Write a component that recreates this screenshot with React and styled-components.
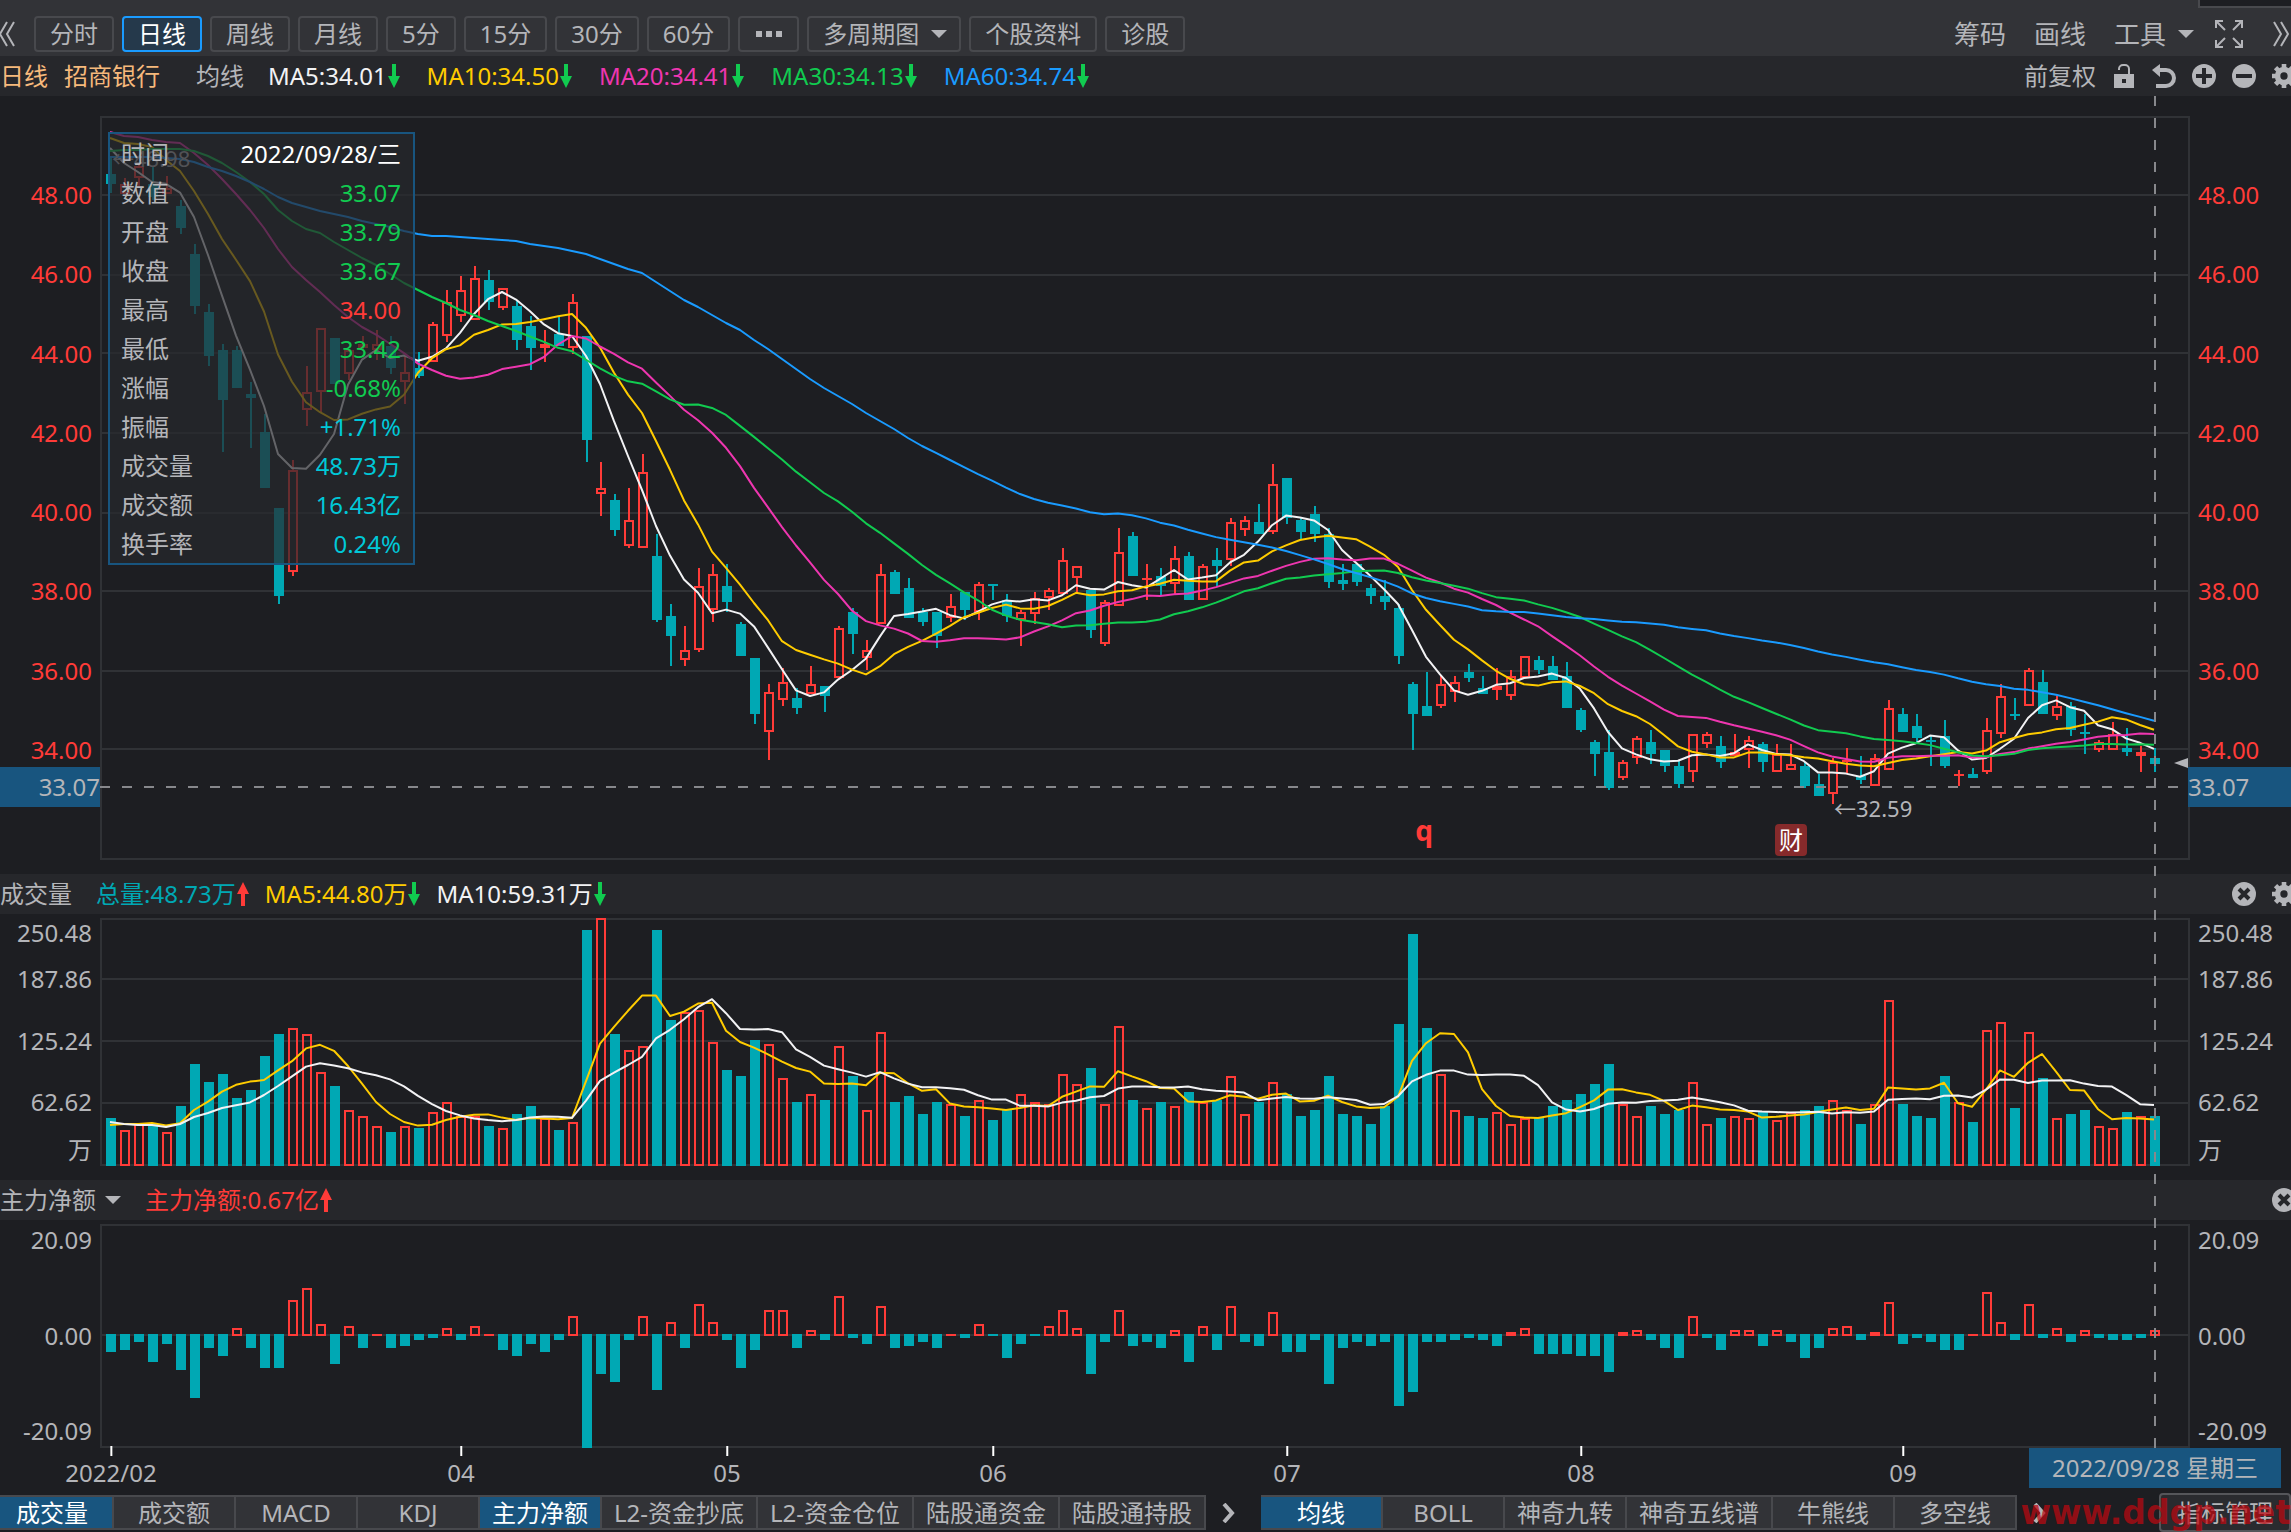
import React from 'react'

import styled, { createGlobalStyle } from 'styled-components'

const GlobalStyle = createGlobalStyle`
  * {
    box-sizing: border-box;
  }
  body {
    margin: 0;
    background: #1d1e22;
  }
  body, button, select {
    font-family: "Noto Sans", "Noto Sans CJK SC", sans-serif;
    font-size: 24px;
    line-height: 24px;
    color: #b4b5b9;
  }
  button, select {
    margin: 0;
    padding: 0;
    border: 0;
    background: none;
    cursor: pointer;
  }
  svg {
    display: block;
    flex: none;
  }
`

const UP = '#ff3b38'
const DOWN = '#00a8b4'
const GREEN = '#11cb50'
const CYAN = '#00c8d8'
const YELLOW = '#ffcc00'
const MAGENTA = '#ee36b0'
const BLUE = '#1a9bff'

/* ---------- chart data ---------- */

// [high, body top, body bottom, low, rising] in drawing units, y grows downwards
const CANDLES = [
  [157, 174, 184, 193, 0], [178, 184, 194, 194, 1], [164, 166, 178, 186, 1], [166, 184, 197, 200, 0],
  [176, 188, 194, 194, 1], [200, 206, 228, 234, 0], [244, 254, 306, 314, 0], [304, 312, 356, 366, 0],
  [344, 350, 400, 452, 0], [346, 350, 388, 388, 0], [382, 394, 398, 448, 0], [414, 432, 488, 488, 0],
  [508, 508, 596, 604, 0], [460, 470, 572, 576, 1], [366, 392, 410, 426, 1], [328, 328, 392, 412, 1],
  [338, 338, 384, 384, 0], [350, 350, 374, 380, 1], [336, 344, 348, 350, 1], [330, 344, 350, 360, 1],
  [336, 346, 368, 374, 0], [356, 372, 382, 404, 1], [352, 368, 376, 378, 0], [322, 324, 362, 362, 1],
  [290, 302, 336, 342, 1], [276, 290, 316, 322, 1], [266, 278, 320, 320, 1], [270, 280, 302, 310, 0],
  [288, 288, 308, 310, 1], [300, 306, 340, 350, 0], [316, 326, 348, 370, 0], [330, 344, 348, 362, 1],
  [317, 334, 346, 346, 0], [294, 302, 348, 354, 1], [336, 336, 440, 462, 0], [462, 488, 494, 516, 1],
  [494, 500, 530, 536, 0], [488, 520, 546, 548, 1], [454, 472, 548, 548, 1], [534, 556, 620, 622, 0],
  [604, 616, 636, 666, 0], [626, 650, 660, 666, 1], [568, 586, 650, 652, 1], [564, 574, 610, 622, 1],
  [564, 586, 602, 612, 0], [622, 624, 656, 656, 0], [658, 658, 714, 724, 0], [684, 692, 732, 760, 1],
  [668, 682, 700, 706, 1], [688, 698, 708, 714, 0], [666, 684, 694, 694, 1], [686, 686, 696, 712, 0],
  [626, 628, 678, 678, 1], [608, 612, 634, 654, 0], [640, 650, 658, 670, 1], [564, 574, 624, 624, 1],
  [570, 572, 594, 594, 0], [578, 588, 618, 618, 0], [608, 612, 622, 626, 0], [612, 612, 636, 648, 0],
  [594, 606, 618, 622, 1], [592, 592, 610, 620, 0], [582, 584, 612, 620, 1], [584, 584, 586, 600, 0],
  [594, 600, 616, 622, 0], [610, 612, 620, 646, 1], [592, 598, 614, 624, 1], [588, 590, 598, 610, 1],
  [548, 560, 594, 594, 1], [566, 566, 578, 592, 1], [590, 590, 630, 638, 0], [600, 602, 644, 646, 1],
  [528, 552, 606, 606, 1], [532, 536, 576, 576, 0], [564, 578, 580, 600, 1], [568, 576, 586, 596, 0],
  [546, 558, 584, 594, 1], [552, 556, 600, 600, 0], [564, 566, 600, 600, 1], [548, 560, 566, 586, 0],
  [518, 522, 560, 566, 1], [516, 520, 530, 536, 1], [504, 522, 534, 534, 0], [464, 484, 532, 534, 1],
  [478, 478, 518, 524, 0], [518, 520, 532, 540, 0], [506, 514, 534, 542, 0], [528, 534, 582, 588, 0],
  [564, 580, 584, 590, 0], [564, 564, 582, 586, 0], [584, 588, 596, 604, 0], [580, 596, 602, 610, 0],
  [604, 608, 656, 664, 0], [682, 684, 714, 750, 0], [672, 706, 716, 716, 0], [676, 684, 706, 708, 1],
  [676, 682, 692, 702, 1], [664, 672, 678, 682, 0], [676, 688, 694, 694, 0], [668, 686, 690, 700, 1],
  [670, 676, 696, 700, 1], [656, 656, 678, 678, 1], [656, 660, 670, 674, 0], [656, 666, 680, 680, 0],
  [662, 676, 708, 708, 0], [708, 710, 730, 732, 0], [740, 742, 754, 776, 0], [730, 752, 788, 790, 0],
  [760, 762, 778, 780, 1], [736, 738, 758, 764, 1], [730, 742, 754, 764, 0], [750, 750, 766, 772, 0],
  [760, 766, 784, 788, 0], [734, 734, 772, 782, 1], [732, 734, 744, 748, 1], [736, 746, 762, 768, 0],
  [734, 752, 756, 756, 1], [736, 740, 750, 768, 1], [742, 744, 762, 772, 0], [744, 754, 772, 772, 1],
  [744, 764, 770, 770, 1], [762, 766, 786, 788, 0], [774, 784, 796, 796, 0], [758, 762, 794, 804, 1],
  [748, 760, 762, 774, 1], [756, 776, 780, 784, 0], [754, 758, 786, 786, 1], [700, 708, 770, 770, 1],
  [708, 714, 732, 732, 0], [714, 726, 738, 742, 0], [736, 740, 742, 766, 0], [720, 736, 766, 768, 0],
  [770, 774, 776, 786, 1], [768, 774, 778, 778, 0], [718, 730, 772, 774, 1], [684, 696, 734, 738, 1],
  [698, 714, 716, 720, 0], [668, 670, 706, 706, 1], [670, 682, 714, 714, 0], [696, 706, 716, 720, 1],
  [702, 706, 730, 736, 0], [714, 732, 734, 754, 0], [740, 742, 750, 752, 1], [722, 734, 750, 750, 1],
  [728, 748, 752, 756, 0], [746, 752, 756, 772, 1], [748, 758, 764, 772, 0],
]

const VOLUMES = [
  48, 36, 42, 42, 34, 60, 102, 84, 92, 68, 76, 110, 132, 138, 132, 94, 80, 56, 50, 40, 34, 40, 38, 54, 64,
  50, 50, 40, 38, 52, 60, 48, 36, 44, 236, 248, 132, 116, 120, 236, 146, 154, 156, 124, 96, 90, 126, 122,
  88, 64, 72, 66, 120, 90, 56, 134, 64, 70, 52, 64, 62, 50, 66, 46, 56, 72, 64, 62, 92, 82, 98, 62, 140,
  66, 58, 64, 60, 74, 64, 66, 90, 52, 64, 84, 72, 50, 56, 90, 52, 50, 42, 60, 142, 232, 138, 92, 56, 50,
  48, 54, 42, 48, 48, 60, 66, 72, 82, 102, 62, 50, 60, 52, 56, 84, 42, 48, 50, 48, 54, 46, 54, 56, 60, 66,
  56, 42, 62, 166, 62, 50, 48, 90, 64, 44, 136, 144, 58, 134, 88, 48, 52, 56, 40, 38, 54, 50, 50,
]

const NET_FLOW = [
  -17, -15, -7, -27, -9, -35, -63, -13, -21, 7, -13, -33, -33, 35, 47, 11, -29, 9, -13, 1, -13, -11, -5,
  -3, 7, -5, 9, 1, -15, -21, -9, -17, -5, 19, -113, -39, -47, -5, 19, -55, 13, -13, 31, 13, -5, -33, -15,
  25, 25, -13, 5, -5, 39, -3, -9, 29, -13, -11, -7, -13, 1, -3, 11, -1, -23, -9, -1, 9, 25, 7, -39, -7,
  25, -11, -7, -13, 5, -27, 9, -15, 29, -7, -11, 23, -17, -17, -5, -49, -13, -7, -11, -7, -71, -57, -7,
  -7, -5, -3, -5, -11, 3, 7, -19, -19, -19, -21, -21, -37, 3, 5, -5, -13, -23, 19, -3, -15, 5, 5, -11, 5,
  -7, -23, -13, 7, 9, -5, 3, 33, -9, -3, -7, -15, -15, 1, 43, 13, -5, 31, -3, 7, -7, 5, -3, -5, -5, -3, 5,
]

// averages for the first bars, where the window reaches back before the visible range
const SEED5 = [148, 163, 172, 182]
const SEED10 = [138, 143, 144, 147, 160, 171, 191, 214, 239]
const SEED20 = [132, 136, 137, 140, 142, 143, 153, 165, 179, 194, 210, 228, 249, 267, 280, 292, 305, 317, 327]
const SEED30 = [
  151, 150, 150, 149, 149, 149, 151, 156, 163, 172, 182, 194, 210, 221, 229, 233, 242, 250, 258, 265,
  274, 283, 290, 297, 303, 310, 315, 321, 326,
]
const SEED60 = [
  157, 157, 157, 157, 158, 159, 162, 167, 171, 176, 182, 189, 197, 203, 207, 211, 214, 217, 221, 224,
  227, 231, 234, 236, 236, 237, 238, 239, 240, 241, 244, 246, 248, 251, 254, 259, 264, 269, 273, 282,
  291, 300, 307, 315, 323, 330, 340, 349, 359, 369, 379, 388, 396, 404, 413, 421, 429, 438, 446,
]

const PLOT_X = 100
const PLOT_W = 2090
const PLOT_RIGHT = 2189
const VOLUME_BASE = 1166
const NET_BASE = 1335

const barX = (i) => 111 + 14 * i

const closes = CANDLES.map(([, top, bottom, , up]) => (up ? top : bottom))
const volumeTops = VOLUMES.map((v) => VOLUME_BASE - v)

function movingAverage(values, size, seed) {
  return values.map((_, i) => {
    if (i < seed.length) return seed[i]
    const part = values.slice(i - size + 1, i + 1)
    return part.reduce((sum, v) => sum + v, 0) / size
  })
}

const PRICE_LINES = [
  { color: '#f2f2f4', values: movingAverage(closes, 5, SEED5) },
  { color: YELLOW, values: movingAverage(closes, 10, SEED10) },
  { color: MAGENTA, values: movingAverage(closes, 20, SEED20) },
  { color: GREEN, values: movingAverage(closes, 30, SEED30) },
  { color: BLUE, values: movingAverage(closes, 60, SEED60) },
]

const VOLUME_LINES = [
  { color: YELLOW, values: movingAverage(volumeTops, 5, [1125, 1124, 1124, 1123]) },
  { color: '#f2f2f4', values: movingAverage(volumeTops, 10, [1122, 1124, 1125, 1125, 1127, 1124, 1117, 1113, 1108]) },
]

/* ---------- page text ---------- */

const PERIODS = ['分时', '日线', '周线', '月线', '5分', '15分', '30分', '60分']
const PRICE_LABELS = ['48.00', '46.00', '44.00', '42.00', '40.00', '38.00', '36.00', '34.00']
const VOLUME_LABELS = ['250.48', '187.86', '125.24', '62.62', '万']
const NET_LABELS = ['20.09', '0.00', '-20.09']

const AVERAGES = [
  { text: 'MA5:34.01', color: '#f2f2f4' },
  { text: 'MA10:34.50', color: YELLOW },
  { text: 'MA20:34.41', color: MAGENTA },
  { text: 'MA30:34.13', color: GREEN },
  { text: 'MA60:34.74', color: BLUE },
]

const DETAILS = [
  ['时间', '2022/09/28/三', '#ffffff'],
  ['数值', '33.07', GREEN],
  ['开盘', '33.79', GREEN],
  ['收盘', '33.67', GREEN],
  ['最高', '34.00', UP],
  ['最低', '33.42', GREEN],
  ['涨幅', '-0.68%', GREEN],
  ['振幅', '+1.71%', CYAN],
  ['成交量', '48.73万', CYAN],
  ['成交额', '16.43亿', CYAN],
  ['换手率', '0.24%', CYAN],
]

const MONTHS = [
  { text: '2022/02', bar: 0 },
  { text: '04', bar: 25 },
  { text: '05', bar: 44 },
  { text: '06', bar: 63 },
  { text: '07', bar: 84 },
  { text: '08', bar: 105 },
  { text: '09', bar: 128 },
]

const SUB_TABS = ['成交量', '成交额', 'MACD', 'KDJ', '主力净额', 'L2-资金抄底', 'L2-资金仓位', '陆股通资金', '陆股通持股']
const MAIN_TABS = ['均线', 'BOLL', '神奇九转', '神奇五线谱', '牛熊线', '多空线']

/* ---------- styled parts ---------- */

const Page = styled.main`
  position: relative;
  overflow: hidden;
  background: #1d1e22;
  white-space: nowrap;
`
const Toolbar = styled.header`
  position: relative;
  display: flex;
  align-items: center;
  justify-content: space-between;
  height: 56px;
  padding: 12px 2px 0 0;
  background: #323337;
`
const ToolGroup = styled.div`
  display: flex;
  align-items: center;
  gap: ${({ $gap }) => $gap}px;
`
const PeriodButton = styled.button`
  display: flex;
  align-items: center;
  height: 36px;
  padding: 0 14px;
  border: 2px solid ${({ $active }) => ($active ? BLUE : '#48494d')};
  border-radius: 4px;
  background: ${({ $active }) => ($active ? '#25394b' : 'transparent')};
  color: ${({ $active }) => ($active ? '#ffffff' : '#b4b5b9')};
`
const PeriodSelect = styled.label`
  display: flex;
  align-items: center;
  gap: 12px;
  height: 36px;
  padding: 0 12px 0 14px;
  border: 2px solid #48494d;
  border-radius: 4px;
`
const BareSelect = styled.select`
  appearance: none;
  height: 32px;
`
const ToolButton = styled.button`
  display: flex;
  align-items: center;
  gap: 12px;
  font-size: 26px;
  line-height: 32px;
`
const IconButton = styled.button`
  display: block;
`
const WindowEdge = styled.div`
  position: absolute;
  top: 0;
  right: 0;
  width: 93px;
  height: 8px;
  border-left: 2px solid #48494d;
  border-bottom: 2px solid #48494d;
  background: #1d1e22;
`
const InfoBar = styled.div`
  display: flex;
  align-items: center;
  height: 40px;
  overflow: hidden;
  background: #26272b;
`
const InfoTitle = styled.span`
  margin-right: ${({ $gap }) => $gap}px;
  color: ${({ $color }) => $color || '#b4b5b9'};
`
const InfoValues = styled.div`
  display: flex;
  gap: ${({ $gap }) => $gap}px;
`
const InfoValue = styled.span`
  display: flex;
  align-items: center;
  gap: 1px;
  color: ${({ $color }) => $color};
`
const InfoActions = styled.div`
  display: flex;
  align-items: center;
  gap: 16px;
  margin-left: auto;
  margin-right: -5px;
`
const InfoSelect = styled.label`
  display: flex;
  align-items: center;
  gap: 9px;
  margin-right: 24px;
`
const Charts = styled.div`
  position: relative;
`
const Panel = styled.section`
  position: relative;
  display: grid;
  grid-template-columns: 100px 1fr 101px;
  height: ${({ $height }) => $height}px;
`
const Plot = styled.svg`
  width: 100%;
  height: ${({ $height }) => $height}px;
`
const Axis = styled.div`
  display: flex;
  flex-direction: column;
  justify-content: space-between;
  padding-left: ${({ $side }) => ($side === 'right' ? '8px' : '0')};
  padding-right: ${({ $side }) => ($side === 'left' ? '8px' : '0')};
  text-align: ${({ $side }) => ($side === 'left' ? 'right' : 'left')};
`
const PriceAxis = styled(Axis)`
  padding-top: 87px;
  padding-bottom: 112px;
  color: ${UP};
`
const VolumeAxis = styled(Axis)`
  display: grid;
  grid-template-rows: 46px 62px 61px 48px;
  justify-content: stretch;
  align-content: start;
  padding-top: 7px;
`
const NetAxis = styled(Axis)`
  padding-top: 8px;
  padding-bottom: 5px;
`
const PriceFlag = styled.div`
  position: absolute;
  top: 671px;
  ${({ $side }) => $side}: 0;
  width: ${({ $side }) => ($side === 'left' ? 100 : 103)}px;
  padding: 8px 0;
  background: #18557f;
  text-align: ${({ $side }) => ($side === 'left' ? 'right' : 'left')};
`
const Details = styled.dl`
  position: absolute;
  top: 36px;
  left: 108px;
  width: 307px;
  margin: 0;
  padding: 0 12px 0 11px;
  border: 2px solid #18557f;
  background: rgba(39, 40, 44, 0.7);
`
const DetailRow = styled.div`
  display: flex;
  justify-content: space-between;
  line-height: 39px;
`
const DetailName = styled.dt`
  color: #b4b5b9;
`
const DetailValue = styled.dd`
  margin: 0;
  color: ${({ $color }) => $color};
`
const Crosshair = styled.svg`
  position: absolute;
  top: 0;
  left: 100px;
  width: calc(100% - 201px);
  height: 1352px;
  pointer-events: none;
`
const DateAxis = styled.div`
  position: relative;
  height: 47px;
  margin: 0 101px 0 100px;
`
const Month = styled.span`
  position: absolute;
  top: 0;
  padding-top: 13px;
  transform: translateX(-50%);

  &::before {
    content: '';
    position: absolute;
    top: -2px;
    left: calc(50% - 1px);
    width: 2px;
    height: 10px;
    background: #ffffff;
  }
`
const DateFlag = styled.div`
  position: absolute;
  top: 0;
  right: -91px;
  width: 252px;
  padding: 8px 0;
  background: #18557f;
  text-align: center;
`
const Footer = styled.footer`
  position: relative;
  display: flex;
  height: 37px;
`
const Tabs = styled.nav`
  display: flex;
  height: 35px;
  margin-left: ${({ $pull }) => ($pull ? '-8px' : '0')};
  border-top: 2px solid #48494d;
  border-bottom: 2px solid #48494d;
  background: #323337;
`
const Tab = styled.button`
  min-width: 122px;
  padding: 0 12px;
  border-right: 2px solid #48494d;
  background: ${({ $active }) => ($active ? '#18557f' : 'transparent')};
  color: ${({ $active }) => ($active ? '#ffffff' : '#b4b5b9')};
`
const NextButton = styled.button`
  display: flex;
  align-items: center;
  width: 55px;
  height: 35px;
  padding-left: 16px;
`
const ManageButton = styled.button`
  width: 132px;
  height: 39px;
  margin: -2px 0 0 auto;
  border: 2px solid #55565a;
  border-radius: 4px;
  background: #2a2b2f;
`
const Watermark = styled.span`
  position: absolute;
  right: 0;
  top: 0;
  font-family: "DejaVu Sans", sans-serif;
  font-size: 33px;
  font-weight: 700;
  line-height: 35px;
  color: rgba(190, 8, 16, 0.72);
  pointer-events: none;
`

/* ---------- icons ---------- */

function Caret() {
  return (
    <svg width="16" height="8" viewBox="0 0 16 8"><path d="M0 0h16l-8 8z" fill="#b4b5b9" /></svg>
  )
}

function TrendArrow({ up }) {
  return (
    <svg width="12" height="24" viewBox="0 0 12 24">
      {
        up ?
          <path d="M6 0l6 12H8v12H4V12H0z" fill={UP} /> :
          <path d="M4 0h4v12h4L6 24 0 12h4z" fill={GREEN} />
      }
    </svg>
  )
}

function DoubleLeft() {
  return (
    <svg width="26" height="26" viewBox="0 0 26 26" fill="none" stroke="#b4b5b9" strokeWidth="2">
      <path d="M7 1L0 13l7 12M14 1L7 13l7 12" />
    </svg>
  )
}

function DoubleRight() {
  return (
    <svg width="25" height="26" viewBox="0 0 25 26" fill="none" stroke="#b4b5b9" strokeWidth="2">
      <path d="M10 1l7 12-7 12M17 1l7 12-7 12" />
    </svg>
  )
}

function ExpandIcon() {
  return (
    <svg width="28" height="28" viewBox="0 0 28 28" fill="none" stroke="#b4b5b9" strokeWidth="2">
      <path d="M1 8V1h7M1 1l9 9M20 1h7v7M27 1l-9 9M1 20v7h7M1 27l9-9M20 27h7v-7M27 27l-9-9" />
    </svg>
  )
}

function UnlockIcon() {
  return (
    <svg width="24" height="24" viewBox="0 0 24 24">
      <path d="M7 6V5a4 4 0 0 1 4-4h2a4 4 0 0 1 4 4v6" fill="none" stroke="#b4b5b9" strokeWidth="2" />
      <path d="M2 10h20v14H2zM10 15v4h4v-4z" fill="#b4b5b9" fillRule="evenodd" />
    </svg>
  )
}

function UndoIcon() {
  return (
    <svg width="24" height="24" viewBox="0 0 24 24">
      <path d="M6 6h8a8 8 0 0 1 0 16H4" fill="none" stroke="#b4b5b9" strokeWidth="4" />
      <path d="M0 6l8-6v13z" fill="#b4b5b9" />
    </svg>
  )
}

function RoundIcon({ d }) {
  return (
    <svg width="24" height="24" viewBox="0 0 24 24">
      <circle cx="12" cy="12" r="12" fill="#b4b5b9" />
      <path d={d} stroke="#26272b" strokeWidth="4" />
    </svg>
  )
}

function GearIcon() {
  return (
    <svg width="24" height="24" viewBox="-13 -13 26 26" overflow="visible">
      <circle r="7" fill="none" stroke="#b4b5b9" strokeWidth="6" />
      {
        [0, 45, 90, 135].map((a) => (
          <path key={a} d="M-2.5 -13h5v5h-5zM-2.5 8h5v5h-5z" fill="#b4b5b9" transform={`rotate(${a})`} />
        ))
      }
    </svg>
  )
}

function ChevronRight() {
  return (
    <svg width="14" height="20" viewBox="0 0 14 20" fill="none" stroke="#b4b5b9" strokeWidth="4">
      <path d="M2 1l8 9-8 9" />
    </svg>
  )
}

/* ---------- chart pieces ---------- */

function GridLines({ lines, top, bottom }) {
  return (
    <g stroke="#303236" strokeWidth="2" fill="none">
      <path d={`M101 ${top}H${PLOT_RIGHT}V${bottom}H101Z`} />
      {lines.map((y) => <path key={y} d={`M102 ${y}H${PLOT_RIGHT}`} />)}
    </g>
  )
}

function Bar({ x, top, bottom, up }) {
  if(up && bottom - top > 4)
    return <rect x={x - 4} y={top + 1} width="8" height={bottom - top - 2} fill="none" stroke={UP} strokeWidth="2" />
  return <rect x={x - 5} y={top} width="10" height={bottom - top} fill={up ? UP : DOWN} />
}

function Candle({ x, data }) {
  const [high, top, bottom, low, up] = data
  return (
    <g>
      <path d={`M${x} ${high}V${top}M${x} ${bottom}V${low}`} stroke={up ? UP : DOWN} strokeWidth="2" />
      <Bar x={x} top={top} bottom={bottom} up={up} />
    </g>
  )
}

function AverageLine({ values, color }) {
  const points = values.map((y, i) => `${barX(i) - 1},${y}`).join(' ')
  return <polyline points={points} fill="none" stroke={color} strokeWidth="2" strokeLinejoin="round" />
}

function PriceChart() {
  return (
    <Plot $height={778} viewBox={`${PLOT_X} 96 ${PLOT_W} 778`} preserveAspectRatio="none">
      <GridLines lines={[195, 275, 353, 433, 513, 591, 671, 749]} top={117} bottom={859} />
      {CANDLES.map((data, i) => <Candle key={i} x={barX(i)} data={data} />)}
      {PRICE_LINES.map(({ color, values }) => <AverageLine key={color} color={color} values={values} />)}
      <path d="M100 787H2180" stroke="#87888c" strokeWidth="2" strokeDasharray="10 12" />
      <path d="M2174 763l14-5v10z" fill="#b4b5b9" />
      <g fill="#b4b5b9" fontSize="22">
        <text x="112" y="167">←48.98</text>
        <text x="1834" y="817">←32.59</text>
      </g>
      <text x="1424" y="841" fill={UP} fontSize="28" fontWeight="700" textAnchor="middle">q</text>
      <rect x="1775" y="824" width="32" height="32" rx="4" fill="#862a2b" />
      <text x="1791" y="849" fill="#ffffff" fontSize="24" textAnchor="middle">财</text>
    </Plot>
  )
}

function VolumeChart() {
  return (
    <Plot $height={266} viewBox={`${PLOT_X} 914 ${PLOT_W} 266`} preserveAspectRatio="none">
      <GridLines lines={[979, 1041, 1103]} top={919} bottom={1165} />
      {
        volumeTops.map((top, i) => (
          <Bar key={i} x={barX(i)} top={top} bottom={VOLUME_BASE} up={CANDLES[i][4]} />
        ))
      }
      {VOLUME_LINES.map(({ color, values }) => <AverageLine key={color} color={color} values={values} />)}
    </Plot>
  )
}

function NetChart() {
  return (
    <Plot $height={228} viewBox={`${PLOT_X} 1220 ${PLOT_W} 228`} preserveAspectRatio="none">
      <GridLines lines={[NET_BASE]} top={1225} bottom={1447} />
      {
        NET_FLOW.map((v, i) => (
          v > 0 ?
            <Bar key={i} x={barX(i)} top={NET_BASE - v} bottom={NET_BASE + 1} up={1} /> :
            <Bar key={i} x={barX(i)} top={NET_BASE - 1} bottom={NET_BASE - v} up={0} />
        ))
      }
    </Plot>
  )
}

function AxisLabels({ as: AxisType, labels, side }) {
  return (
    <AxisType $side={side}>
      {labels.map((text) => <span key={text}>{text}</span>)}
    </AxisType>
  )
}

function DetailBox() {
  return (
    <Details>
      {
        DETAILS.map(([name, value, color]) => (
          <DetailRow key={name}>
            <DetailName>{name}</DetailName>
            <DetailValue $color={color}>{value}</DetailValue>
          </DetailRow>
        ))
      }
    </Details>
  )
}

function TopToolbar() {
  return (
    <Toolbar>
      <ToolGroup $gap={8}>
        <IconButton aria-label="收起"><DoubleLeft /></IconButton>
        {PERIODS.map((text) => <PeriodButton key={text} $active={text === '日线'}>{text}</PeriodButton>)}
        <PeriodButton aria-label="更多周期">
          <svg width="29" height="6" viewBox="0 0 29 6"><path d="M2 0h6v6H2zM12 0h6v6h-6zM22 0h6v6h-6z" fill="#b4b5b9" /></svg>
        </PeriodButton>
        <PeriodSelect>
          <BareSelect aria-label="多周期图"><option>多周期图</option></BareSelect>
          <Caret />
        </PeriodSelect>
        <PeriodButton>个股资料</PeriodButton>
        <PeriodButton>诊股</PeriodButton>
      </ToolGroup>
      <ToolGroup $gap={21}>
        <ToolGroup $gap={28}>
          <ToolButton>筹码</ToolButton>
          <ToolButton>画线</ToolButton>
          <ToolButton>工具<Caret /></ToolButton>
        </ToolGroup>
        <IconButton aria-label="全屏"><ExpandIcon /></IconButton>
        <IconButton aria-label="展开"><DoubleRight /></IconButton>
      </ToolGroup>
      <WindowEdge />
    </Toolbar>
  )
}

function App() {
  return (
    <Page>
      <GlobalStyle />
      <TopToolbar />
      <InfoBar>
        <InfoTitle $gap={16} $color="#f6b97c">日线</InfoTitle>
        <InfoTitle $gap={36} $color="#f6b97c">招商银行</InfoTitle>
        <InfoTitle $gap={24}>均线</InfoTitle>
        <InfoValues $gap={27}>
          {AVERAGES.map(({ text, color }) => <InfoValue key={text} $color={color}>{text}<TrendArrow /></InfoValue>)}
        </InfoValues>
        <InfoActions>
          <button>前复权</button>
          <IconButton aria-label="解锁"><UnlockIcon /></IconButton>
          <IconButton aria-label="撤销"><UndoIcon /></IconButton>
          <IconButton aria-label="放大"><RoundIcon d="M4 12h16M12 4v16" /></IconButton>
          <IconButton aria-label="缩小"><RoundIcon d="M4 12h16" /></IconButton>
          <IconButton aria-label="设置"><GearIcon /></IconButton>
        </InfoActions>
      </InfoBar>

      <Charts>
        <Panel $height={778}>
          <AxisLabels as={PriceAxis} labels={PRICE_LABELS} side="left" />
          <PriceChart />
          <AxisLabels as={PriceAxis} labels={PRICE_LABELS} side="right" />
          <PriceFlag $side="left">33.07</PriceFlag>
          <PriceFlag $side="right">33.07</PriceFlag>
          <DetailBox />
        </Panel>

        <InfoBar>
          <InfoTitle $gap={24}>成交量</InfoTitle>
          <InfoValues $gap={16}>
            <InfoValue $color={DOWN}>总量:48.73万<TrendArrow up /></InfoValue>
            <InfoValue $color={YELLOW}>MA5:44.80万<TrendArrow /></InfoValue>
            <InfoValue $color="#f2f2f4">MA10:59.31万<TrendArrow /></InfoValue>
          </InfoValues>
          <InfoActions>
            <IconButton aria-label="关闭成交量"><RoundIcon d="M7 7l10 10M17 7L7 17" /></IconButton>
            <IconButton aria-label="设置成交量"><GearIcon /></IconButton>
          </InfoActions>
        </InfoBar>
        <Panel $height={266}>
          <AxisLabels as={VolumeAxis} labels={VOLUME_LABELS} side="left" />
          <VolumeChart />
          <AxisLabels as={VolumeAxis} labels={VOLUME_LABELS} side="right" />
        </Panel>

        <InfoBar>
          <InfoSelect>
            <BareSelect aria-label="主力净额"><option>主力净额</option></BareSelect>
            <Caret />
          </InfoSelect>
          <InfoValue $color={UP}>主力净额:0.67亿<TrendArrow up /></InfoValue>
          <InfoActions>
            <IconButton aria-label="关闭主力净额"><RoundIcon d="M7 7l10 10M17 7L7 17" /></IconButton>
          </InfoActions>
        </InfoBar>
        <Panel $height={228}>
          <AxisLabels as={NetAxis} labels={NET_LABELS} side="left" />
          <NetChart />
          <AxisLabels as={NetAxis} labels={NET_LABELS} side="right" />
        </Panel>
        <Crosshair viewBox={`${PLOT_X} 96 ${PLOT_W} 1352`} preserveAspectRatio="none">
          <path d="M2155 96V1448" stroke="#87888c" strokeWidth="2" strokeDasharray="10 12" />
        </Crosshair>
      </Charts>

      <DateAxis>
        {
          MONTHS.map(({ text, bar }) => (
            <Month key={text} style={{ left: `${(barX(bar) - PLOT_X) / PLOT_W * 100}%` }}>{text}</Month>
          ))
        }
        <DateFlag>2022/09/28 星期三</DateFlag>
      </DateAxis>

      <Footer>
        <Tabs $pull>
          {SUB_TABS.map((text) => <Tab key={text} $active={text === '成交量' || text === '主力净额'}>{text}</Tab>)}
        </Tabs>
        <NextButton aria-label="更多副图指标"><ChevronRight /></NextButton>
        <Tabs>
          {MAIN_TABS.map((text) => <Tab key={text} $active={text === '均线'}>{text}</Tab>)}
        </Tabs>
        <NextButton aria-label="更多主图指标"><ChevronRight /></NextButton>
        <ManageButton>指标管理</ManageButton>
        <Watermark>www.ddgp.net</Watermark>
      </Footer>
    </Page>
  )
}

export default App
